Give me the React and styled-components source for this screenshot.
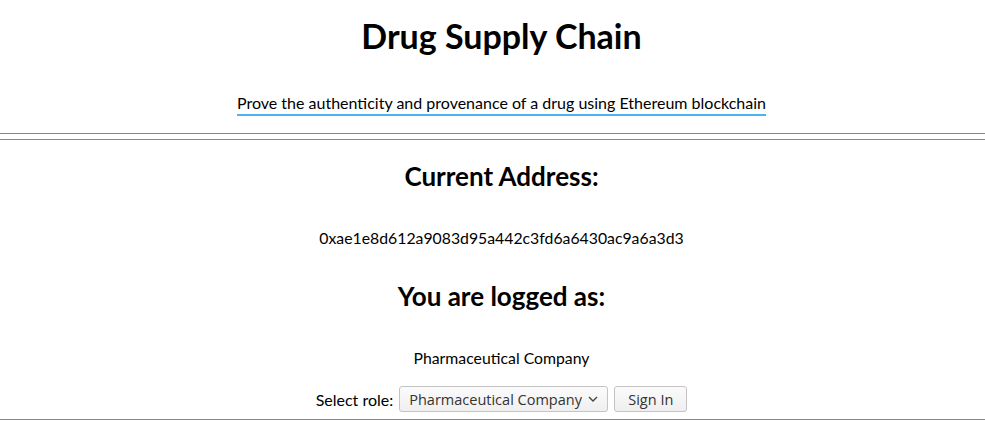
import React, { useState } from "react";
import styled, { createGlobalStyle } from "styled-components";

const GlobalStyle = createGlobalStyle`
  html, body {
    margin: 0;
    padding: 0;
    background: #ffffff;
  }
  body {
    font-family: Lato, "Open Sans", sans-serif;
    color: #000;
  }
`;

const roles = [
  "Pharmaceutical Company",
  "Distributor",
  "Pharmacy",
  "Patient",
];

const Chevron = () => (
  <ChevronIcon width="10" height="6" viewBox="0 0 10 6" aria-hidden="true">
    <path d="M1 1l4 4 4-4" fill="none" stroke="#444" strokeWidth="1.4" />
  </ChevronIcon>
);

const App = () => {
  const [role, setRole] = useState(roles[0]);
  return (
    <>
      <GlobalStyle />
      <Page>
        <Header>
          <Title>Drug Supply Chain</Title>
          <Tagline>
            Prove the authenticity and provenance of a drug using Ethereum
            blockchain
          </Tagline>
        </Header>
      </Page>
      <Divider />
      <Divider />
      <Page>
        <Section>
          <SectionTitle>Current Address:</SectionTitle>
          <Value>0xae1e8d612a9083d95a442c3fd6a6430ac9a6a3d3</Value>
        </Section>
        <Section>
          <SectionTitle>You are logged as:</SectionTitle>
          <Value>Pharmaceutical Company</Value>
        </Section>
        <RoleForm onSubmit={(e) => e.preventDefault()}>
          <label htmlFor="role">Select role:</label>
          <SelectWrap>
            <RoleSelect
              id="role"
              value={role}
              onChange={(e) => setRole(e.target.value)}
            >
              {roles.map((r) => (
                <option key={r}>{r}</option>
              ))}
            </RoleSelect>
            <Chevron />
          </SelectWrap>
          <FormButton type="submit">Sign In</FormButton>
        </RoleForm>
      </Page>
      <Divider />
    </>
  );
};

export default App;

const Page = styled.div`
  padding-left: 18px;
  display: flex;
  flex-direction: column;
  align-items: center;
`;

const Header = styled.header`
  display: flex;
  flex-direction: column;
  align-items: center;
  padding-bottom: 17px;
`;

const Title = styled.h1`
  font-size: 34px;
  font-weight: 700;
  margin: 16px 0 0;
  line-height: 40px;
`;

const Tagline = styled.p`
  font-size: 16px;
  margin: 37px 0 0;
  line-height: 19px;
  padding-bottom: 2px;
  border-bottom: 2px solid #4ab3f4;
`;

const Divider = styled.hr`
  margin: 0 0 5px;
  border: 0;
  border-top: 1px solid #888888;
  height: 0;
`;

const Section = styled.section`
  display: flex;
  flex-direction: column;
  align-items: center;
  margin-top: 16px;

  & + & {
    margin-top: 34px;
  }
`;

const SectionTitle = styled.h2`
  font-size: 26px;
  font-weight: 700;
  margin: 0;
  line-height: 31px;
`;

const Value = styled.p`
  font-size: 15.8px;
  margin: 36px 0 0;
  line-height: 19px;
`;

const RoleForm = styled.form`
  display: flex;
  align-items: center;
  gap: 6px;
  font-size: 16px;
  margin: 19px 0 7px;
`;

const SelectWrap = styled.div`
  position: relative;
  display: flex;
`;

const ChevronIcon = styled.svg`
  position: absolute;
  right: 10px;
  top: 10px;
  pointer-events: none;
`;

const controlBase = `
  font-family: "Open Sans", "DejaVu Sans", sans-serif;
  font-size: 14.5px;
  color: #333;
  height: 26px;
  border: 1px solid #c4c4c4;
  border-radius: 3px;
  background: linear-gradient(#fbfbfb, #efefef);
`;

const RoleSelect = styled.select`
  ${controlBase}
  appearance: none;
  padding: 0 25px 0 9px;
`;

const FormButton = styled.button`
  ${controlBase}
  padding: 0 13px;
`;
